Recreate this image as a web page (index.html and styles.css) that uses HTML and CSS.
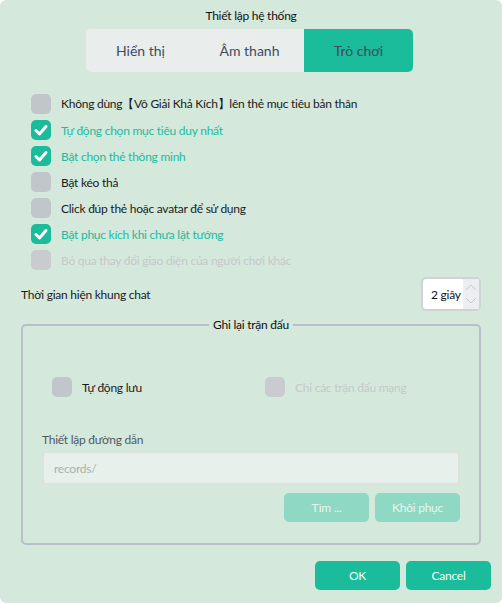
FILE: index.html
```html
<!DOCTYPE html>
<html lang="vi">
<head>
<meta charset="utf-8">
<link rel="stylesheet" href="styles.css">
</head>
<body>
<div class="window">
  <div class="title">Thiết lập hệ thống</div>
  <div class="tabs">
    <div class="tab">Hiển thị</div>
    <div class="tab">Âm thanh</div>
    <div class="tab active">Trò chơi</div>
  </div>

  <div class="options">
    <div class="opt"><span class="box"></span><span class="lbl">Không dùng【Vô Giải Khả Kích】lên thẻ mục tiêu bản thân</span></div>
    <div class="opt on"><span class="box"><svg viewBox="0 0 20 20"><path d="M5 10.5 L8.5 14 L15 6.5"/></svg></span><span class="lbl">Tự động chọn mục tiêu duy nhất</span></div>
    <div class="opt on"><span class="box"><svg viewBox="0 0 20 20"><path d="M5 10.5 L8.5 14 L15 6.5"/></svg></span><span class="lbl">Bật chọn thẻ thông minh</span></div>
    <div class="opt"><span class="box"></span><span class="lbl">Bật kéo thả</span></div>
    <div class="opt"><span class="box"></span><span class="lbl">Click đúp thẻ hoặc avatar để sử dụng</span></div>
    <div class="opt on"><span class="box"><svg viewBox="0 0 20 20"><path d="M5 10.5 L8.5 14 L15 6.5"/></svg></span><span class="lbl">Bật phục kích khi chưa lật tướng</span></div>
    <div class="opt off"><span class="box"></span><span class="lbl">Bỏ qua thay đổi giao diện của người chơi khác</span></div>
  </div>

  <div class="chatrow">
    <span class="lbl">Thời gian hiện khung chat</span>
    <div class="spin">
      <span class="val">2 giây</span>
      <span class="arrows">
        <svg viewBox="0 0 16 30"><path d="M3 11 L8 6 L13 11"/><path d="M3 19 L8 24 L13 19"/></svg>
      </span>
    </div>
  </div>

  <fieldset class="group">
    <legend>Ghi lại trận đấu</legend>
    <div class="grouprow">
      <div class="opt first"><span class="box"></span><span class="lbl">Tự động lưu</span></div>
      <div class="opt off"><span class="box"></span><span class="lbl">Chỉ các trận đấu mạng</span></div>
    </div>
    <div class="pathlbl">Thiết lập đường dẫn</div>
    <div class="input">records/</div>
    <div class="gbtns">
      <div class="btn light">Tìm ...</div>
      <div class="btn light">Khôi phục</div>
    </div>
  </fieldset>

  <div class="footer">
    <div class="btn main">OK</div>
    <div class="btn main">Cancel</div>
  </div>
</div>
</body>
</html>
```
FILE: styles.css
```css
html, body {
  margin: 0;
  padding: 0;
  background: #ffffff;
}
body {
  font-family: "Lato", "Noto Sans", sans-serif;
  font-size: 12px;
  letter-spacing: -0.25px;
  color: #1b1b1b;
}
.window {
  width: 502px;
  height: 603px;
  box-sizing: border-box;
  background: #d5e8dc;
  border-radius: 6px;
  display: flex;
  flex-direction: column;
  overflow: hidden;
}
.title {
  text-align: center;
  height: 16px;
  line-height: 16px;
  margin-top: 8px;
  color: #111;
}
.tabs {
  margin: 5px 0 0 86px;
  width: 327px;
  height: 43px;
  display: flex;
  background: #e9eeed;
  border-radius: 5px;
  overflow: hidden;
}
.tab {
  flex: 1;
  display: flex;
  align-items: center;
  justify-content: center;
  font-size: 14px;
  letter-spacing: 0;
  color: #3d4b5e;
}
.tab.active {
  background: #1abc9c;
}
.options {
  margin-top: 19px;
  padding-left: 31px;
  display: flex;
  flex-direction: column;
}
.opt {
  height: 26px;
  display: flex;
  align-items: center;
  gap: 10px;
  white-space: nowrap;
}
.box {
  width: 20px;
  height: 20px;
  border-radius: 5px;
  background: #c1c6cb;
  display: flex;
  align-items: center;
  justify-content: center;
  flex: none;
}
.box svg {
  width: 20px;
  height: 20px;
  fill: none;
  stroke: #fff;
  stroke-width: 3;
  stroke-linecap: round;
  stroke-linejoin: round;
}
.opt.on .box { background: #1abc9c; }
.opt.on .lbl { color: #1abc9c; }
.opt.off .box { background: #c9cbcf; }
.opt.off .lbl { color: #c5c9c9; }
.chatrow {
  margin-top: 4px;
  height: 34px;
  padding: 0 21px;
  display: flex;
  align-items: center;
  justify-content: space-between;
}
.spin {
  width: 60px;
  height: 34px;
  box-sizing: border-box;
  background: #fff;
  border: 2px solid #cdd3d7;
  border-radius: 5px;
  display: flex;
  align-items: stretch;
  justify-content: space-between;
  white-space: nowrap;
}
.spin .val {
  padding-left: 8px;
  display: flex;
  align-items: center;
  color: #111;
}
.arrows {
  width: 16px;
  background: #eceeef;
  display: flex;
}
.arrows svg {
  width: 16px;
  height: 30px;
  fill: none;
  stroke: #c3c7cb;
  stroke-width: 1;
}
.group {
  margin: 7px 0 0 21px;
  width: 460px;
  min-width: 0;
  height: 227px;
  box-sizing: border-box;
  border: 2px solid #b8bfc6;
  border-radius: 5px;
  padding: 0 19px;
}
.group legend {
  margin: 0 auto;
  padding: 0 4px;
  color: #111;
  line-height: 14px;
}
.grouprow {
  margin-top: 42px;
  padding-left: 10px;
  display: flex;
}
.grouprow .opt.first { width: 213px; }
.pathlbl {
  margin-top: 32px;
  color: #4d5866;
  height: 16px;
  line-height: 16px;
}
.input {
  margin-top: 3px;
  height: 34px;
  box-sizing: border-box;
  background: #e8f0ec;
  border: 2px solid #dbe3df;
  border-radius: 5px;
  padding-left: 10px;
  display: flex;
  align-items: center;
  color: #a9b1ad;
}
.gbtns {
  margin-top: 8px;
  display: flex;
  justify-content: flex-end;
  gap: 6px;
}
.btn {
  width: 85px;
  height: 29px;
  border-radius: 5px;
  display: flex;
  align-items: center;
  justify-content: center;
}
.btn.light {
  background: #8ed8c4;
  color: #e6f6f1;
}
.footer {
  margin-top: 16px;
  padding-right: 11px;
  display: flex;
  justify-content: flex-end;
  gap: 6px;
}
.btn.main {
  background: #1abc9c;
  color: #f4fffb;
}
```
